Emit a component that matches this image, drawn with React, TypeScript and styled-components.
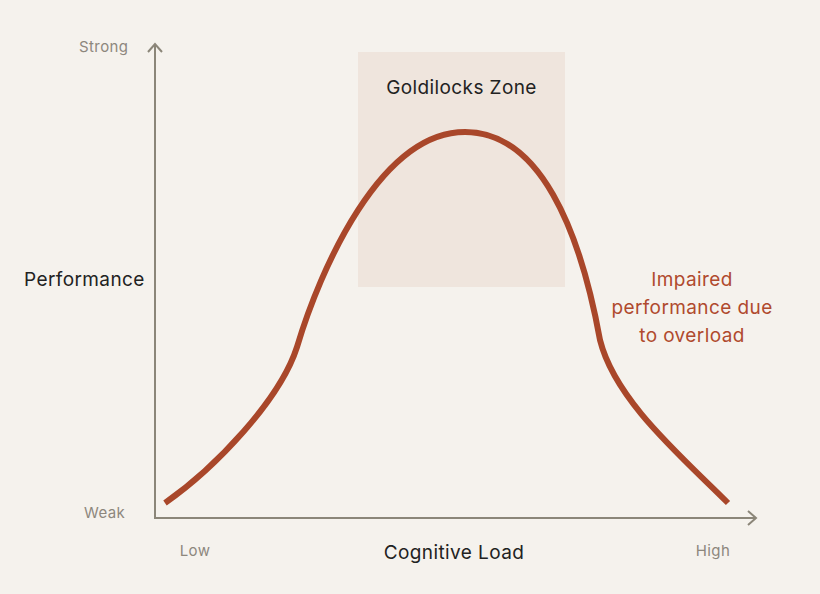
import React from "react";
import styled, { createGlobalStyle } from "styled-components";

const GlobalStyle = createGlobalStyle`
  html, body {
    margin: 0;
    padding: 0;
    background: #f5f2ed;
  }
  body {
    font-family: Inter, "Noto Sans", "Liberation Sans", sans-serif;
  }
`;

const Page = styled.div`
  width: 820px;
  height: 594px;
  display: flex;
  flex-direction: column;
  background: #f5f2ed;
  overflow: hidden;
`;

const ChartRow = styled.div`
  display: grid;
  grid-template-columns: 145px 1fr;
  height: 530px;
`;

const YLabels = styled.div`
  display: flex;
  flex-direction: column;
  justify-content: space-between;
  padding: 38px 0 8px;
  box-sizing: border-box;
`;

const TickLabel = styled.span<{ $indent?: number }>`
  display: block;
  margin-left: ${(p) => p.$indent ?? 0}px;
  font-size: 15px;
  line-height: 18px;
  letter-spacing: 0.4px;
  color: #8d877d;
`;

const AxisTitle = styled.span<{ $indent?: number }>`
  display: block;
  margin-left: ${(p) => p.$indent ?? 0}px;
  font-size: 19px;
  line-height: 22px;
  letter-spacing: 0.4px;
  color: #222;
`;

const Plot = styled.div`
  position: relative;
`;

const Zone = styled.div`
  position: absolute;
  left: 213px;
  top: 52px;
  width: 207px;
  height: 235px;
  background: #efe5dd;
  display: flex;
  justify-content: center;
  padding-top: 25px;
  box-sizing: border-box;
`;

const ZoneTitle = styled.span`
  font-size: 19px;
  line-height: 22px;
  letter-spacing: 0.4px;
  color: #222;
`;

const Annotation = styled.div`
  position: absolute;
  left: 447px;
  top: 266px;
  width: 200px;
  text-align: center;
  font-size: 19px;
  line-height: 28px;
  letter-spacing: 0.4px;
  color: #b04a2e;
`;

const Drawing = styled.svg`
  position: absolute;
  inset: 0;
  overflow: visible;
`;

const XLabels = styled.div`
  display: flex;
  justify-content: space-between;
  align-items: flex-start;
  padding: 12px 87px 0 175px;
`;

const XTick = styled(TickLabel)<{ $w: number }>`
  width: ${(p) => p.$w}px;
  text-align: center;
`;

const XTitle = styled(AxisTitle)`
  width: 200px;
  text-align: center;
`;

const AXIS = "#8b8679";
const CURVE = "#a9472a";

export default function App() {
  return (
    <>
      <GlobalStyle />
      <Page>
        <ChartRow>
          <YLabels>
            <TickLabel $indent={79}>Strong</TickLabel>
            <AxisTitle $indent={24}>Performance</AxisTitle>
            <TickLabel $indent={84}>Weak</TickLabel>
          </YLabels>
          <Plot>
            <Zone>
              <ZoneTitle>Goldilocks Zone</ZoneTitle>
            </Zone>
            <Annotation>
              Impaired
              <br />
              performance due
              <br />
              to overload
            </Annotation>
            <Drawing width="675" height="530" viewBox="0 0 675 530">
              <g stroke={AXIS} strokeWidth="2" fill="none">
                <line x1="10" y1="44" x2="10" y2="519" />
                <polyline points="3,52 10,44 17,52" />
                <line x1="9" y1="518" x2="610" y2="518" />
                <polyline points="603,511 611,518 603,525" />
              </g>
              <path
                d="M20,503 C70,468 135,400 152,347 C175,270 235,132 320,132 C395,132 435,230 455,340 C470,400 535,455 583,503"
                stroke={CURVE}
                strokeWidth="6"
                fill="none"
              />
            </Drawing>
          </Plot>
        </ChartRow>
        <XLabels>
          <XTick $w={40}>Low</XTick>
          <XTitle>Cognitive Load</XTitle>
          <XTick $w={40}>High</XTick>
        </XLabels>
      </Page>
    </>
  );
}
